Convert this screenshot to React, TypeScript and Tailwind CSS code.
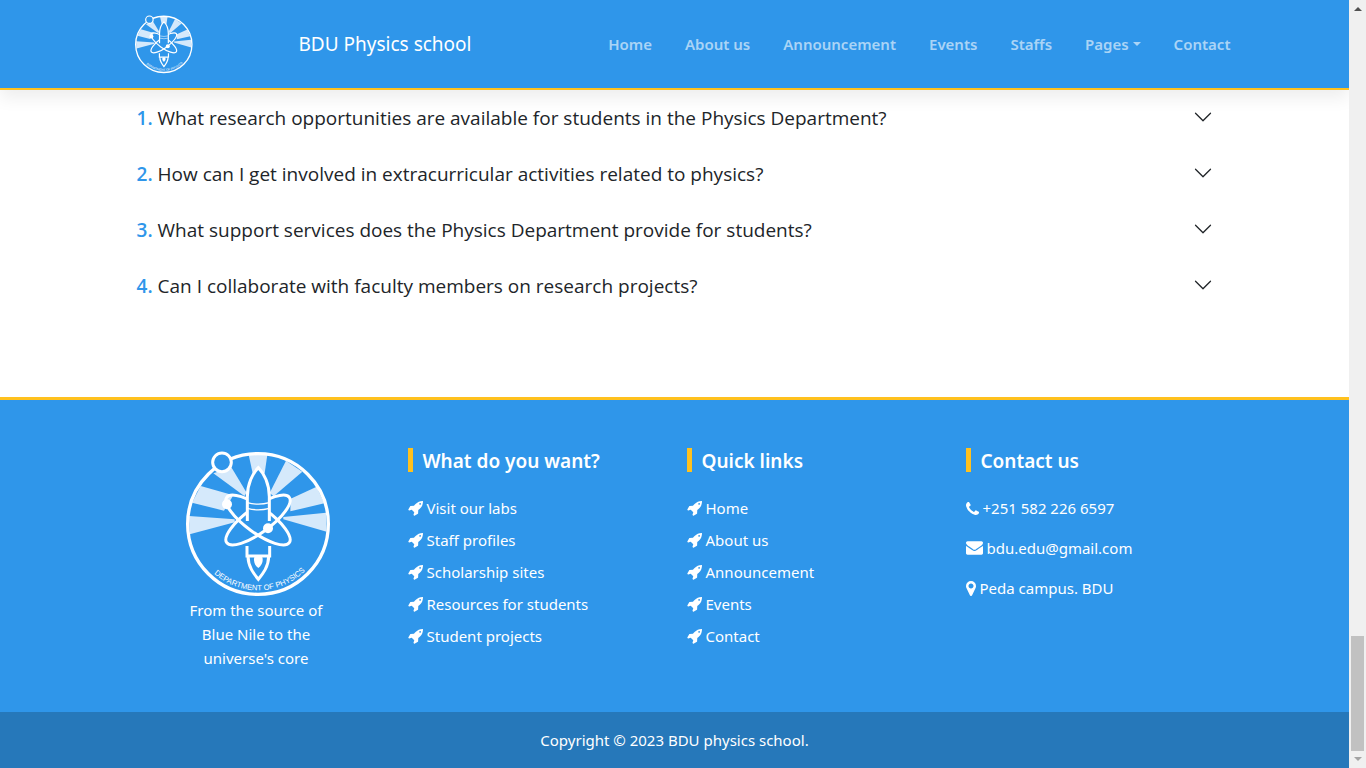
import React from "react";
import { BsChevronDown } from "react-icons/bs";

const navItems = ["Home", "About us", "Announcement", "Events", "Staffs", "Pages", "Contact"];

const questions = [
  "What research opportunities are available for students in the Physics Department?",
  "How can I get involved in extracurricular activities related to physics?",
  "What support services does the Physics Department provide for students?",
  "Can I collaborate with faculty members on research projects?",
];

const wants = ["Visit our labs", "Staff profiles", "Scholarship sites", "Resources for students", "Student projects"];
const quick = ["Home", "About us", "Announcement", "Events", "Contact"];

function Logo({ id, className }: { id: string; className: string }) {
  return (
    <svg viewBox="33 24 450 450" className={className} role="img" aria-label="Department of Physics">
      <g fill="#d5e9fb">
        <path d="M236 44h56l-8 56h-36z" />
        <path d="M130 100l54-18 46 76-7 10z" />
        <path d="M92 138l98 28-28 46-96-24z" />
        <path d="M57 228l137 10v9L59 283z" />
        <path d="M348 62l49 33-86 74-12-10z" />
        <path d="M440 140l23 50-102 24 1-38z" />
        <path d="M468 218l2 57-130-37v-7z" />
      </g>
      <g fill="none" stroke="#fff">
        <circle cx="264" cy="252" r="211" strokeWidth="10" />
        <circle cx="156" cy="67" r="28" strokeWidth="9" fill="#2f96ea" />
        <g strokeWidth="9">
          <ellipse cx="264" cy="240" rx="116" ry="38" transform="rotate(36 264 240)" />
          <ellipse cx="264" cy="240" rx="116" ry="38" transform="rotate(-36 264 240)" />
        </g>
        <path d="M232 243V170C232 132 248 100 265 83C282 100 298 132 298 170V243" strokeWidth="9" fill="#2f96ea" />
        <path d="M232 188q33 9 66 0M232 205q33 9 66 0" strokeWidth="4" />
        <path d="M231 318v30h68v-30" strokeWidth="9" />
        <path d="M234 348C234 380 252 402 265 418C278 402 296 380 296 348" strokeWidth="9" />
      </g>
      <g fill="#fff">
        <path d="M253 352q12-7 24 0q5 18-12 32q-17-14-12-32z" />
        <circle cx="171" cy="193" r="15" />
        <circle cx="294" cy="265" r="15" />
      </g>
      <path id={id} d="M65 252a199 199 0 0 0 398 0" fill="none" />
      <text fill="#fff" fontFamily="Liberation Sans, sans-serif" fontSize="23" textAnchor="middle">
        <textPath href={"#" + id} startOffset="51%">
          DEPARTMENT OF PHYSICS
        </textPath>
      </text>
    </svg>
  );
}

function RocketIcon() {
  return (
    <svg viewBox="0 128 1664 1664" className="size-[15px]" fill="currentColor" aria-hidden="true">
      <path d="M1440 448q0-40-28-68t-68-28-68 28-28 68 28 68 68 28 68-28 28-68zm224-288q0 249-75.5 430.5t-253.5 360.5q-81 80-195 176l-20 379q-2 16-16 26l-384 224q-7 4-16 4-12 0-23-9l-64-64q-13-14-8-32l85-276-281-281-276 85q-3 1-9 1-14 0-23-9l-64-64q-17-19-5-39l224-384q10-14 26-16l379-20q96-114 176-195 188-187 358-258t431-71q14 0 24 9.5t10 22.5z" />
    </svg>
  );
}

function Column({ title, children }: { title: string; children: React.ReactNode }) {
  return (
    <section className="px-3">
      <h2 className="mb-6 h-6 border-l-[5px] border-[#ffc11e] pl-2.5 text-[19px] leading-[26px] font-semibold">{title}</h2>
      {children}
    </section>
  );
}

function LinkList({ items }: { items: string[] }) {
  return (
    <ul className="space-y-2">
      {items.map((item) => (
        <li key={item}>
          <a href="#" className="flex items-center gap-1">
            <RocketIcon />
            {item}
          </a>
        </li>
      ))}
    </ul>
  );
}

export default function App() {
  return (
    <div className="flex min-h-screen bg-white font-['Noto_Sans','Open_Sans',sans-serif] text-[15px] leading-6 text-[#212529]">
      <div className="flex min-w-0 flex-1 flex-col">
        <header className="relative border-b-2 border-[#ffc11e] bg-[#2f96ea] shadow-[0_8px_16px_rgba(0,0,0,0.07)]">
          <div className="mx-auto flex h-22 max-w-[1140px] items-center pr-[14px] pl-7">
            <Logo id="arc-header" className="size-[60px]" />
            <a href="#" className="ml-[106px] text-[19px] text-white">
              BDU Physics school
            </a>
            <nav className="ml-auto flex gap-[33px] font-semibold text-white/60">
              {navItems.map((item) =>
                item === "Pages" ? (
                  <button key={item} type="button" className="flex items-center gap-1">
                    {item}
                    <svg viewBox="0 0 8 4" className="h-1 w-2" fill="currentColor">
                      <path d="M0 0h8L4 4z" />
                    </svg>
                  </button>
                ) : (
                  <a key={item} href="#">
                    {item}
                  </a>
                ),
              )}
            </nav>
          </div>
        </header>

        <main className="mx-auto w-full max-w-[1140px] flex-1 px-8 pb-20 font-['Open_Sans','Noto_Sans',sans-serif]">
          {questions.map((q, i) => (
            <button key={q} type="button" className="flex h-14 w-full items-center justify-between text-left text-[19px]">
              <span>
                <span className="font-semibold text-[#2f96ea]">{i + 1}.</span> {q}
              </span>
              <BsChevronDown className="mb-0.5 size-5" />
            </button>
          ))}
        </main>

        <footer className="border-t-3 border-[#ffc11e] bg-[#2f96ea] text-white">
          <div className="mx-auto grid max-w-[1116px] grid-cols-4 pt-12 pb-[42px]">
            <div className="flex flex-col items-center px-3 text-center">
              <Logo id="arc-footer" className="size-[150px]" />
              <p className="w-36">From the source of Blue Nile to the universe's core</p>
            </div>
            <Column title="What do you want?">
              <LinkList items={wants} />
            </Column>
            <Column title="Quick links">
              <LinkList items={quick} />
            </Column>
            <Column title="Contact us">
              <address className="space-y-4 not-italic">
                <p className="flex items-center gap-1">
                  <svg viewBox="192 128 1408 1408" className="size-[13px]" fill="currentColor">
                    <path d="M1600 1240q0 27-10 70.5t-21 68.5q-21 50-122 106-94 51-186 51-27 0-53-3.5t-57.5-12.5-47-14.5-55.5-20.5-49-18q-98-35-175-83-127-79-264-216t-216-264q-48-77-83-175-3-9-18-49t-20.5-55.5-14.5-47-12.5-57.5-3.5-53q0-92 51-186 56-101 106-122 25-11 68.5-21t70.5-10q14 0 21 3 18 6 53 76 11 19 30 54t35 63.5 31 53.5q3 4 17.5 25t21.5 35.5 7 28.5q0 20-28.5 50t-62 55-62 53-28.5 46q0 9 5 22.5t8.5 20.5 14 24 11.5 19q76 137 174 235t235 174q2 1 19 11.5t24 14 20.5 8.5 22.5 5q18 0 46-28.5t53-62 55-62 50-28.5q14 0 28.5 7t35.5 21.5 25 17.5q25 15 53.5 31t63.5 35 54 30q70 35 76 53 3 7 3 21z" />
                  </svg>
                  +251 582 226 6597
                </p>
                <p className="flex items-center gap-1">
                  <svg viewBox="0 256 1792 1408" className="h-[14px] w-[17px]" fill="currentColor">
                    <path d="M1792 710v794q0 66-47 113t-113 47h-1472q-66 0-113-47t-47-113v-794q44 49 101 87 362 246 497 345 57 42 92.5 65.5t94.5 48 110 24.5h2q51 0 110-24.5t94.5-48 92.5-65.5q170-123 498-345 57-39 100-87zm0-294q0 79-49 151t-122 123q-376 261-468 325-10 7-42.5 31t-54 38.5-52 32.5-57.5 27-50 9h-2q-23 0-50-9t-57.5-27-52-32.5-54-38.5-42.5-31q-91-64-262-182.5t-205-142.5q-62-42-117-115.5t-55-136.5q0-78 41.5-130t118.5-52h1472q65 0 112.5 47t47.5 113z" />
                  </svg>
                  bdu.edu@gmail.com
                </p>
                <p className="flex items-center gap-1">
                  <svg viewBox="384 128 1024 1536" className="h-[15px] w-[10px]" fill="currentColor">
                    <path d="M1152 640q0-106-75-181t-181-75-181 75-75 181 75 181 181 75 181-75 75-181zm256 0q0 109-33 179l-364 774q-16 33-47.500 52t-67.500 19-67.500-19-46.500-52l-365-774q-33-70-33-179 0-212 150-362t362-150 362 150 150 362z" />
                  </svg>
                  Peda campus. BDU
                </p>
              </address>
            </Column>
          </div>
          <p className="bg-[#2678ba] py-4 text-center">Copyright © 2023 BDU physics school.</p>
        </footer>
      </div>

      <div className="relative flex w-[17px] shrink-0 flex-col items-center bg-[#f0f0f0] pt-[7px] pb-[7px]" aria-hidden="true">
        <svg viewBox="0 0 8 4" className="h-1 w-2" fill="#505050">
          <path d="M0 4h8L4 0z" />
        </svg>
        <div className="mt-auto mb-[6px] h-[115px] w-[13px] bg-[#c1c1c1]" />
        <svg viewBox="0 0 8 4" className="h-1 w-2" fill="#a3a3a3">
          <path d="M0 0h8L4 4z" />
        </svg>
      </div>
    </div>
  );
}
